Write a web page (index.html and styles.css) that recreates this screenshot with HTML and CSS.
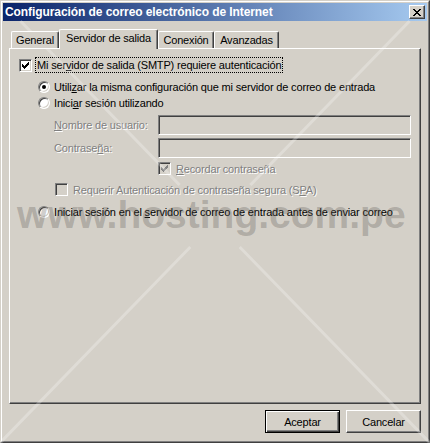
FILE: index.html
```html
<!DOCTYPE html>
<html lang="es">
<head>
<meta charset="utf-8">
<title>Configuración de correo electrónico de Internet</title>
<link rel="stylesheet" href="styles.css">
</head>
<body>
<div class="screen">
  <div class="window">
    <div class="frame">
      <div class="titlebar">
        <span class="title">Configuración de correo electrónico de Internet</span>
        <div class="close">
          <svg width="8" height="7" viewBox="0 0 8 7"><path fill="#000" d="M0 0h2v1h-2zM6 0h2v1h-2zM1 1h2v1h-2zM5 1h2v1h-2zM2 2h4v1h-4zM3 3h2v1h-2zM2 4h4v1h-4zM1 5h2v1h-2zM5 5h2v1h-2zM0 6h2v1h-2zM6 6h2v1h-2z"/></svg>
        </div>
      </div>
      <div class="body">
        <div class="tabs">
          <div class="tab tab-general">General</div>
          <div class="tab tab-sel">Servidor de salida</div>
          <div class="tab tab-conexion">Conexión</div>
          <div class="tab tab-avanzadas">Avanzadas</div>
        </div>
        <div class="panel">
          <div class="row r1">
            <span class="cb"><svg width="7" height="7" viewBox="0 0 7 7"><path fill="#000" d="M0 2v3h1v1h1v1h1v-1h1v-1h1v-1h1v-1h1v-3h-1v1h-1v1h-1v1h-1v1h-1v-1h-1v-1z"/></svg></span>
            <span class="focus">Mi ser<u>v</u>idor de salida (SMTP) requiere autenticación</span>
          </div>
          <div class="row r2">
            <span class="radio on"><span class="dot"></span></span>
            <span class="rlabel">Utili<u>z</u>ar la misma configuración que mi servidor de correo de entrada</span>
          </div>
          <div class="row r3">
            <span class="radio"></span>
            <span class="rlabel">Inici<u>a</u>r sesión utilizando</span>
          </div>
          <div class="row r4">
            <span class="flabel dis"><u>N</u>ombre de usuario:</span>
            <span class="input"></span>
          </div>
          <div class="row r5">
            <span class="flabel dis">Contrase<u>ñ</u>a:</span>
            <span class="input"></span>
          </div>
          <div class="row r6">
            <span class="cb cb-dis"><svg width="7" height="7" viewBox="0 0 7 7"><path fill="#808080" d="M0 2v3h1v1h1v1h1v-1h1v-1h1v-1h1v-1h1v-3h-1v1h-1v1h-1v1h-1v1h-1v-1h-1v-1z"/></svg></span>
            <span class="clabel dis"><u>R</u>ecordar contraseña</span>
          </div>
          <div class="row r7">
            <span class="cb cb-dis"></span>
            <span class="clabel dis">Requerir Autenticación de contraseña segura (S<u>P</u>A)</span>
          </div>
          <div class="row r8">
            <span class="radio"></span>
            <span class="rlabel">Iniciar sesión en el <u>s</u>ervidor de correo de entrada antes de enviar correo</span>
          </div>
        </div>
        <div class="buttons">
          <div class="btn btn-default">Aceptar</div>
          <div class="btn">Cancelar</div>
        </div>
      </div>
    </div>
  </div>
  <div class="watermark">www.hosting.com.pe</div>
  <svg class="lines" width="430" height="443" viewBox="0 0 430 443">
    <g stroke="rgba(255,255,255,0.26)" stroke-width="3" fill="none">
      <line x1="20.4" y1="21" x2="179.6" y2="185"/>
      <line x1="239.7" y1="247" x2="430" y2="443"/>
      <line x1="409.6" y1="21" x2="250.4" y2="185"/>
      <line x1="190.3" y1="247" x2="0" y2="443"/>
    </g>
  </svg>
</div>
</body>
</html>
```
FILE: styles.css
```css
* { box-sizing: border-box; }
html, body { margin: 0; padding: 0; }
body {
  width: 430px;
  height: 443px;
  overflow: hidden;
  background: #D4D0C8;
  font-family: "Liberation Sans", Arial, sans-serif;
  font-size: 11px;
  letter-spacing: -0.17px;
  color: #000;
}
.screen { position: relative; width: 430px; height: 443px; }
.window {
  width: 430px;
  height: 443px;
  border: 1px solid;
  border-color: #D4D0C8 #404040 #404040 #D4D0C8;
  background: #D4D0C8;
}
.frame {
  height: 100%;
  border: 1px solid;
  border-color: #fff #808080 #808080 #fff;
  padding: 1px;
  display: flex;
  flex-direction: column;
}
.titlebar {
  height: 18px;
  flex: none;
  background: linear-gradient(to right, #0A246A, #A6CAF0);
  display: flex;
  align-items: center;
  justify-content: space-between;
  padding: 0 2px;
}
.title {
  color: #fff;
  font-weight: bold;
  font-size: 12px;
  line-height: 18px;
  letter-spacing: -0.08px;
  white-space: nowrap;
}
.close {
  width: 16px;
  height: 14px;
  background: #D4D0C8;
  border: 1px solid;
  border-color: #fff #404040 #404040 #fff;
  box-shadow: inset -1px -1px #808080;
  display: flex;
  align-items: center;
  justify-content: center;
  padding-right: 1px;
}
.close svg { display: block; }
.body {
  flex: 1;
  padding: 8px 6px 0 6px;
  display: flex;
  flex-direction: column;
}
.tabs {
  display: flex;
  align-items: flex-end;
  height: 20px;
  padding-left: 2px;
  position: relative;
  z-index: 1;
}
.tab {
  height: 17px;
  margin-bottom: 1px;
  border-top: 1px solid #fff;
  border-left: 1px solid #fff;
  border-right: 1px solid #404040;
  box-shadow: inset -1px 0 #808080;
  border-radius: 2px 2px 0 0;
  padding-top: 2px;
  line-height: 13px;
  text-align: center;
  white-space: nowrap;
  background: #D4D0C8;
}
.tab-general { width: 48px; }
.tab-sel { width: 99px; height: 20px; margin-bottom: 0; padding-top: 2px; }
.tab-conexion { width: 56px; }
.tab-avanzadas { width: 65px; }
.panel {
  height: 356px;
  margin-top: -1px;
  border: 1px solid;
  border-color: #fff #404040 #404040 #fff;
  box-shadow: inset -1px -1px #808080;
  padding: 8px 0 0 9px;
  position: relative;
}
.row { display: flex; align-items: center; white-space: nowrap; }
.r1 { height: 16px; }
.r2 { height: 16px; margin-top: 6px; margin-left: 19px; }
.r3 { height: 16px; margin-left: 19px; }
.r4 { height: 20px; margin-top: 4px; margin-left: 35px; }
.r5 { height: 20px; margin-top: 3px; margin-left: 35px; }
.r6 { height: 15px; margin-top: 3px; margin-left: 139px; }
.r7 { height: 15px; margin-top: 6px; margin-left: 36px; }
.r8 { height: 16px; margin-top: 7px; margin-left: 19px; }
.cb {
  width: 13px;
  height: 13px;
  flex: none;
  position: relative;
  border: 1px solid;
  border-color: #808080 #fff #fff #808080;
  box-shadow: inset 1px 1px #404040, inset -1px -1px #D4D0C8;
  background: #fff;
}
.cb svg { position: absolute; left: 2px; top: 2px; display: block; }
.cb-dis { background: #D4D0C8; }
.focus {
  margin-left: 3px;
  border: 1px dotted #000;
  padding: 0 1px;
  line-height: 14px;
}
.radio {
  width: 12px;
  height: 12px;
  flex: none;
  border-radius: 50%;
  border: 1px solid;
  border-color: #808080 #fff #fff #808080;
  box-shadow: inset 1px 1px #404040, inset -1px -1px #D4D0C8;
  background: #fff;
  display: flex;
  align-items: center;
  justify-content: center;
}
.dot { width: 4px; height: 4px; border-radius: 50%; background: #000; }
.rlabel { margin-left: 4px; line-height: 14px; }
.flabel { width: 104px; flex: none; line-height: 14px; }
.clabel { margin-left: 5px; line-height: 14px; }
.dis { color: #808080; text-shadow: 1px 1px 0 #fff; }
.input {
  width: 253px;
  height: 20px;
  border: 1px solid;
  border-color: #808080 #fff #fff #808080;
  box-shadow: inset 1px 1px #404040, inset -1px -1px #D4D0C8;
  background: #D4D0C8;
}
.buttons {
  display: flex;
  justify-content: flex-end;
  gap: 6px;
  margin-top: 6px;
}
.btn {
  width: 75px;
  height: 23px;
  display: flex;
  align-items: center;
  justify-content: center;
  border: 1px solid;
  border-color: #fff #404040 #404040 #fff;
  box-shadow: inset -1px -1px #808080;
  line-height: 14px;
}
.btn-default {
  border-color: #000;
  box-shadow: inset 1px 1px #fff, inset -1px -1px #404040, inset -2px -2px #808080;
}
.watermark {
  position: absolute;
  left: 17px;
  top: 195px;
  font-family: "Liberation Sans", Arial, sans-serif;
  font-weight: bold;
  font-size: 39px;
  line-height: 39px;
  letter-spacing: 0;
  color: rgba(90, 86, 80, 0.3);
  white-space: nowrap;
  pointer-events: none;
}
.lines { position: absolute; left: 0; top: 0; pointer-events: none; }
```
